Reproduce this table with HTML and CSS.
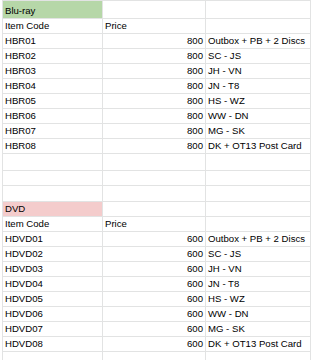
FILE: index.html
```html
<!DOCTYPE html>
<html>
<head>
<meta charset="utf-8">
<link rel="stylesheet" href="styles.css">
</head>
<body>
<div class="sheet">
  <div class="row tall"><div class="cell green">Blu-ray</div><div class="cell"></div><div class="cell"></div><div class="cell"></div></div>
  <div class="row"><div class="cell">Item Code</div><div class="cell">Price</div><div class="cell"></div><div class="cell"></div></div>
  <div class="row"><div class="cell">HBR01</div><div class="cell num">800</div><div class="cell">Outbox + PB + 2 Discs</div><div class="cell"></div></div>
  <div class="row"><div class="cell">HBR02</div><div class="cell num">800</div><div class="cell">SC - JS</div><div class="cell"></div></div>
  <div class="row"><div class="cell">HBR03</div><div class="cell num">800</div><div class="cell">JH - VN</div><div class="cell"></div></div>
  <div class="row"><div class="cell">HBR04</div><div class="cell num">800</div><div class="cell">JN - T8</div><div class="cell"></div></div>
  <div class="row"><div class="cell">HBR05</div><div class="cell num">800</div><div class="cell">HS - WZ</div><div class="cell"></div></div>
  <div class="row"><div class="cell">HBR06</div><div class="cell num">800</div><div class="cell">WW - DN</div><div class="cell"></div></div>
  <div class="row"><div class="cell">HBR07</div><div class="cell num">800</div><div class="cell">MG - SK</div><div class="cell"></div></div>
  <div class="row"><div class="cell">HBR08</div><div class="cell num">800</div><div class="cell">DK + OT13 Post Card</div><div class="cell"></div></div>
  <div class="row gap1"><div class="cell"></div><div class="cell"></div><div class="cell"></div><div class="cell"></div></div>
  <div class="row"><div class="cell"></div><div class="cell"></div><div class="cell"></div><div class="cell"></div></div>
  <div class="row gap3"><div class="cell"></div><div class="cell"></div><div class="cell"></div><div class="cell"></div></div>
  <div class="row"><div class="cell pink">DVD</div><div class="cell"></div><div class="cell"></div><div class="cell"></div></div>
  <div class="row"><div class="cell">Item Code</div><div class="cell">Price</div><div class="cell"></div><div class="cell"></div></div>
  <div class="row"><div class="cell">HDVD01</div><div class="cell num">600</div><div class="cell">Outbox + PB + 2 Discs</div><div class="cell"></div></div>
  <div class="row"><div class="cell">HDVD02</div><div class="cell num">600</div><div class="cell">SC - JS</div><div class="cell"></div></div>
  <div class="row"><div class="cell">HDVD03</div><div class="cell num">600</div><div class="cell">JH - VN</div><div class="cell"></div></div>
  <div class="row"><div class="cell">HDVD04</div><div class="cell num">600</div><div class="cell">JN - T8</div><div class="cell"></div></div>
  <div class="row"><div class="cell">HDVD05</div><div class="cell num">600</div><div class="cell">HS - WZ</div><div class="cell"></div></div>
  <div class="row"><div class="cell">HDVD06</div><div class="cell num">600</div><div class="cell">WW - DN</div><div class="cell"></div></div>
  <div class="row"><div class="cell">HDVD07</div><div class="cell num">600</div><div class="cell">MG - SK</div><div class="cell"></div></div>
  <div class="row"><div class="cell">HDVD08</div><div class="cell num">600</div><div class="cell">DK + OT13 Post Card</div><div class="cell"></div></div>
  <div class="row"><div class="cell"></div><div class="cell"></div><div class="cell"></div><div class="cell"></div></div>
</div>
</body>
</html>
```
FILE: styles.css
```css
html, body {
  margin: 0;
  padding: 0;
  background: #ffffff;
  overflow: hidden;
}
body {
  font-family: "Liberation Sans", Arial, sans-serif;
  font-size: 9.6px;
  color: #000000;
}
.sheet {
  margin-left: 2px;
  border-left: 1px solid #e2e3e3;
  border-top: 1px solid #e2e3e3;
  width: 309px;
}
.row {
  display: grid;
  grid-template-columns: 100px 103px 105px 1fr;
  height: 15px;
}
.row.tall { height: 18px; }
.row.gap1 { height: 17px; }
.row.gap3 { height: 16px; }
.cell {
  box-sizing: border-box;
  border-right: 1px solid #e2e3e3;
  border-bottom: 1px solid #e2e3e3;
  padding: 0 2px 1px 2px;
  display: flex;
  align-items: flex-end;
  white-space: nowrap;
  overflow: hidden;
  line-height: 12px;
}
.num { justify-content: flex-end; }
.green { background: #b6d7a8; }
.pink { background: #f4cccc; }
```
